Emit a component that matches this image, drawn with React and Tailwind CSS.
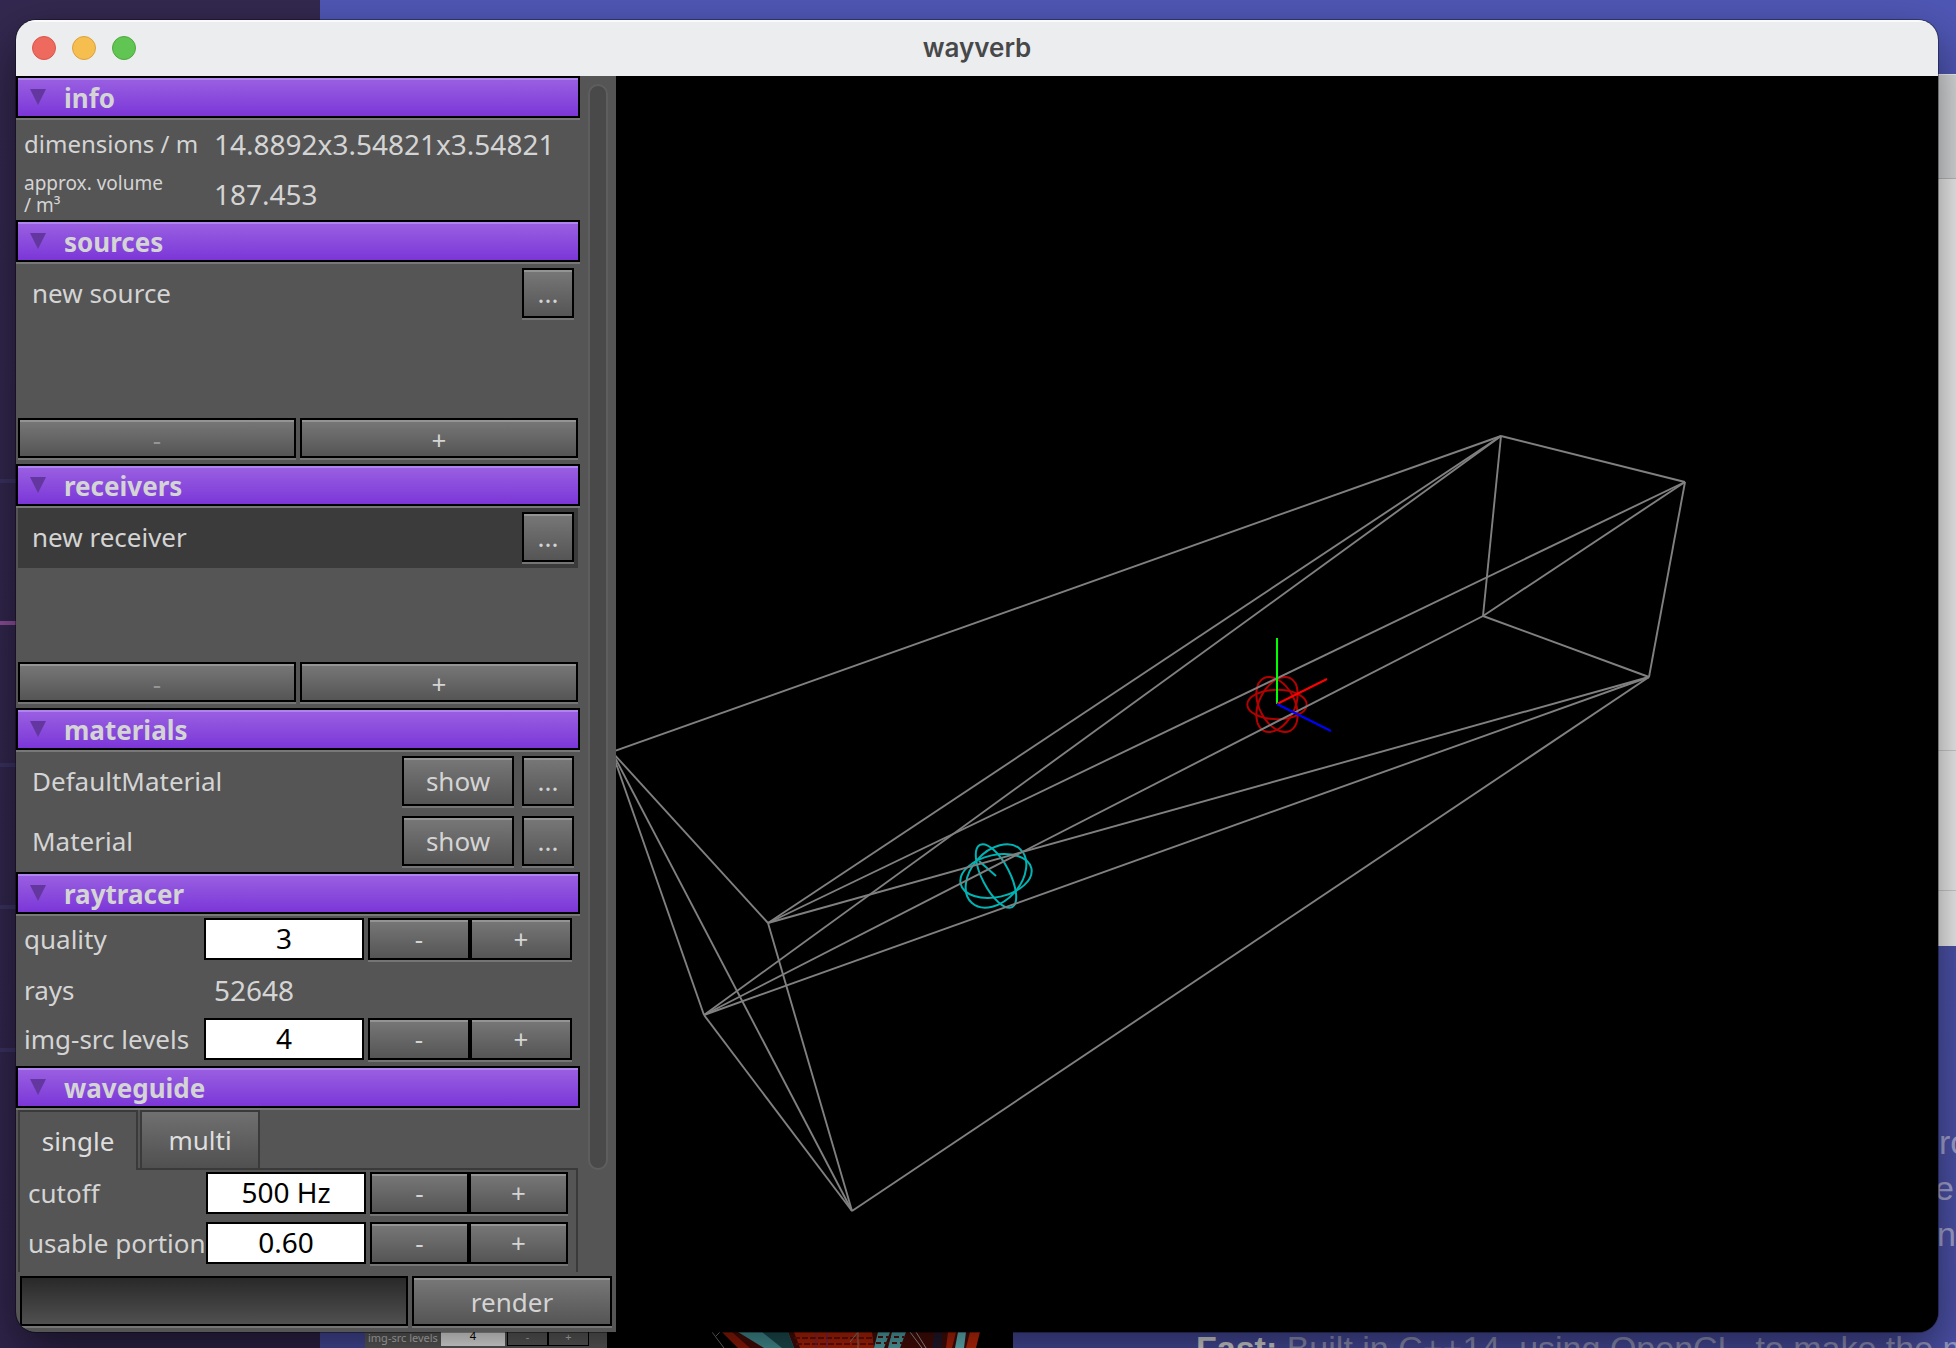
import { useState } from "react";
import clsx from "clsx";

const bevel =
  "border-2 border-black bg-linear-to-b from-[#787878] to-[#555555] shadow-[inset_0_2px_#949494,0_2px_#757575]";

// room corners, in viewport units
const corners = {
  a: [885, 360],
  b: [1069, 406],
  c: [1033, 601],
  d: [867, 540],
  e: [-4, 676],
  f: [152, 847],
  g: [88, 939],
  h: [236, 1135],
};

const edges = [
  "ab", "bc", "cd", "da", "bd", "ea", "fa", "fb", "fc",
  "ga", "gd", "gc", "hc", "ef", "fh", "hg", "ge", "eh",
];

function BevelButton({ className, children, ...props }) {
  return (
    <button
      type="button"
      className={clsx(
        "flex items-center justify-center text-[#d4d4d4] disabled:text-[#959595]",
        bevel,
        className,
      )}
      {...props}
    >
      {children}
    </button>
  );
}

function Section({ title, children }) {
  return (
    <section>
      <h2 className="mb-[2px] h-[42px] border-2 border-black bg-linear-to-b from-[#9a60e1] to-[#7c35d8] shadow-[inset_0_2px_#b084ef,0_2px_#787878]">
        <button
          type="button"
          className="flex h-full w-full items-center gap-[18px] pl-3 text-left text-[26px] leading-none font-bold text-[#d4d4d4]"
        >
          <svg width="16" height="16" viewBox="0 0 16 16" aria-hidden="true">
            <path d="M0 0H16L8 16Z" fill="#63379f" />
          </svg>
          <span className="pt-[2px]">{title}</span>
        </button>
      </h2>
      {children}
    </section>
  );
}

function ItemRow({ name, selected, showable }) {
  return (
    <li
      className={clsx(
        "mx-[2px] flex h-[60px] items-center gap-2 pr-1 pb-[2px] pl-[14px]",
        selected && "bg-[#3b3b3b]",
      )}
    >
      <span className="flex-1">{name}</span>
      {showable && (
        <BevelButton className="h-[50px] w-[112px]">show</BevelButton>
      )}
      <BevelButton className="h-[50px] w-[52px]" aria-label={`edit ${name}`}>
        ...
      </BevelButton>
    </li>
  );
}

function ItemList({ name, selected }) {
  return (
    <div className="flex h-[200px] flex-col pb-[6px]">
      <ul className="flex-1">
        <ItemRow name={name} selected={selected} />
      </ul>
      <div className="mx-[2px] flex gap-1">
        <BevelButton className="h-10 flex-1 pt-1" disabled>
          -
        </BevelButton>
        <BevelButton className="h-10 flex-1 pt-1">+</BevelButton>
      </div>
    </div>
  );
}

function Stepper({ id, label, initial, className, labelWidth = "w-[180px]" }) {
  const [value, setValue] = useState(initial);
  return (
    <div className={clsx("flex h-[50px] items-center pb-1", className)}>
      <label
        htmlFor={id}
        className={clsx("shrink-0 whitespace-nowrap", labelWidth)}
      >
        {label}
      </label>
      <input
        id={id}
        value={value}
        onChange={(e) => setValue(e.target.value)}
        className="mr-1 h-[42px] w-[160px] border-2 border-black bg-white pb-[2px] text-center text-[28px] text-black"
      />
      <BevelButton className="h-[42px] flex-1" aria-label={`decrease ${label}`}>
        -
      </BevelButton>
      <BevelButton className="h-[42px] flex-1" aria-label={`increase ${label}`}>
        +
      </BevelButton>
    </div>
  );
}

function Sidebar() {
  return (
    <aside className="flex w-[600px] shrink-0 flex-col bg-[#555555] font-['Noto_Sans','Open_Sans',sans-serif] text-[26px] leading-none text-[#d4d4d4]">
      <div className="flex min-h-0 flex-1 overflow-hidden">
        <div className="w-[564px]">
          <Section title="info">
            <dl>
              <div className="flex h-[50px] items-center pb-[2px] pl-2">
                <dt className="w-[190px] text-2xl">dimensions / m</dt>
                <dd className="text-[28px]">14.8892x3.54821x3.54821</dd>
              </div>
              <div className="flex h-[50px] items-center pb-[2px] pl-2">
                <dt className="w-[190px] text-[19px] leading-[22px]">
                  approx. volume
                  <br />/ m³
                </dt>
                <dd className="text-[28px]">187.453</dd>
              </div>
            </dl>
          </Section>

          <Section title="sources">
            <ItemList name="new source" />
          </Section>

          <Section title="receivers">
            <ItemList name="new receiver" selected />
          </Section>

          <Section title="materials">
            <ul>
              <ItemRow name="DefaultMaterial" showable />
              <ItemRow name="Material" showable />
            </ul>
          </Section>

          <Section title="raytracer">
            <Stepper id="quality" label="quality" initial="3" className="px-2" />
            <div className="flex h-[50px] items-center pb-[2px] pl-2">
              <span className="w-[190px]">rays</span>
              <span className="text-[28px]">52648</span>
            </div>
            <Stepper
              id="levels"
              label="img-src levels"
              initial="4"
              className="px-2"
            />
          </Section>

          <Section title="waveguide">
            <div className="mx-[2px]">
              <div role="tablist" className="flex h-[60px] text-[#dedede]">
                <button
                  type="button"
                  role="tab"
                  aria-selected="true"
                  className="w-[120px] border-2 border-b-0 border-[#3a3a3a]"
                >
                  single
                </button>
                <div className="w-[2px] border-b-2 border-[#3a3a3a]" />
                <button
                  type="button"
                  role="tab"
                  aria-selected="false"
                  className="w-[120px] border-2 border-[#3a3a3a] bg-linear-to-b from-[#707070] to-[#505050]"
                >
                  multi
                </button>
                <div className="flex-1 border-b-2 border-[#3a3a3a]" />
              </div>
              <div className="h-[160px] border-x-2 border-[#3a3a3a] px-2">
                <Stepper
                  id="cutoff"
                  label="cutoff"
                  initial="500 Hz"
                  labelWidth="w-[178px]"
                />
                <Stepper
                  id="portion"
                  label="usable portion"
                  initial="0.60"
                  labelWidth="w-[178px]"
                />
              </div>
            </div>
          </Section>
        </div>

        <div className="flex-1 px-2 pt-2">
          <div className="h-[1086px] w-5 rounded-full border-2 border-[#5e5e5e] bg-[#494949]" />
        </div>
      </div>

      <div className="flex h-[60px] shrink-0 gap-1 px-1 pt-1">
        <div
          role="progressbar"
          aria-label="render progress"
          className="h-[50px] flex-1 border-2 border-black bg-linear-to-b from-[#292929] to-[#505050] shadow-[0_2px_#757575]"
        />
        <BevelButton className="h-[50px] w-[200px] pt-[2px]">render</BevelButton>
      </div>
    </aside>
  );
}

function Viewport() {
  return (
    <svg
      viewBox="0 0 1322 1256"
      preserveAspectRatio="xMinYMin slice"
      className="h-full w-full"
      fill="none"
      aria-label="room model"
    >
      {/* receiver */}
      <g stroke="#00b4b4" strokeWidth="2" transform="translate(380 800)">
        <ellipse rx="36.2" ry="21.1" transform="rotate(-12.3)" />
        <ellipse rx="24.8" ry="36.2" transform="rotate(41.5)" />
        <ellipse rx="13.8" ry="35" transform="rotate(-27.3)" />
        <path d="M0 0L-17 -15" />
      </g>

      {/* source */}
      <g stroke="#b40000" strokeWidth="2" transform="translate(661 628.5)">
        <ellipse rx="29.7" ry="14.7" />
        <ellipse rx="17.8" ry="29.4" transform="rotate(-26.6)" />
        <ellipse rx="17.8" ry="29.4" transform="rotate(26.6)" />
      </g>

      <g stroke="#808080" strokeWidth="1.9">
        {edges.map((edge) => {
          const [x1, y1] = corners[edge[0]];
          const [x2, y2] = corners[edge[1]];
          return <line key={edge} x1={x1} y1={y1} x2={x2} y2={y2} />;
        })}
      </g>

      {/* axes */}
      <g strokeWidth="2">
        <path d="M661 628V562" stroke="#00ff00" />
        <path d="M661 628L711 603" stroke="#ff0000" />
        <path d="M661 628L715 655" stroke="#0000ff" />
      </g>
    </svg>
  );
}

// Everything that peeks out from behind the main window
function Desktop() {
  return (
    <div
      aria-hidden="true"
      className="absolute inset-0 overflow-hidden bg-linear-to-b from-[#4f57b5] to-[#4b50a6] font-['Liberation_Sans',sans-serif] text-[34px] leading-[46px] text-[#a3a4d0]"
    >
      <div className="absolute inset-y-0 left-0 w-[320px] bg-linear-to-b from-[#33284f] to-[#30254c]">
        <div className="absolute top-[479px] h-1 w-full bg-[#3a3160]" />
        <div className="absolute top-[621px] h-1 w-full bg-[#8a4d98]" />
        <div className="absolute top-[763px] h-1 w-full bg-[#3a3160]" />
        <div className="absolute top-[905px] h-1 w-full bg-[#3a3160]" />
        <div className="absolute top-[1048px] h-1 w-full bg-[#3a3160]" />
      </div>

      <div className="absolute top-[74px] right-0 h-[872px] w-40 bg-[#f0f0f0]">
        <div className="h-[105px] border-t border-b border-t-[#f4f4f4] border-b-[#bcbcbc] bg-[#d8dadc]" />
        <div className="h-[572px] border-b border-[#cfcfcf]" />
        <div className="h-[140px] border-b border-[#cfcfcf]" />
      </div>

      <p className="absolute top-[1119px] left-[1939px]">ro</p>
      <p className="absolute top-[1165px] left-[1935px]">er</p>
      <p className="absolute top-[1211px] left-[1937px]">n</p>
      <p className="absolute top-[1325px] left-[1196px] whitespace-nowrap text-[#9a9bc4]">
        <strong className="text-[#e4e4e4]">Fast:</strong> Built in C++14, using
        OpenCL, to make the most
      </p>

      <div className="absolute bottom-0 left-[365px] flex h-10 w-[648px] items-end bg-black">
        <div className="flex h-10 w-[242px] items-end bg-[#626262] pl-[3px] font-['Noto_Sans',sans-serif] text-[11px] leading-5 text-[#d0d0d0]">
          <span className="w-[73px] whitespace-nowrap">img-src levels</span>
          <span className="mb-[2px] h-10 w-16 bg-white pt-5 text-center text-black">
            4
          </span>
          <span className="mb-[2px] ml-[2px] h-10 w-[41px] border border-black pt-5 text-center">
            -
          </span>
          <span className="mb-[2px] h-10 w-[41px] border border-black pt-5 text-center">
            +
          </span>
        </div>
        <svg
          width="268"
          height="16"
          viewBox="0 0 268 16"
          className="ml-[105px]"
        >
          <path d="M10 0H268L258 16H26Z" fill="#4a0d08" />
          <path d="M10 0H20L38 16H26Z" fill="#9c1c08" />
          <path d="M0 0L12 16M4 4L8 0" stroke="#777" fill="none" />
          <path d="M26 0H76L82 16H52Z" fill="#4a9ea2" />
          <path d="M50 0H76L82 16H70Z" fill="#1e5357" />
          <path d="M82 0H160L162 16H88Z" fill="#c02408" />
          <path
            d="M82 6H160M84 12H162"
            stroke="#6e1206"
            strokeWidth="2"
            strokeDasharray="6 2"
          />
          <path d="M104 0V16M115 0V16" stroke="#7a2a6a" />
          <path d="M138 10L146 0M146 16V0" stroke="#9a8a80" />
          <path d="M166 0H178L172 16H162Z" fill="#57b5bb" />
          <path d="M180 0H194L188 16H176Z" fill="#57b5bb" />
          <path
            d="M166 5H192M164 11H190"
            stroke="#5a1410"
            strokeWidth="2"
            strokeDasharray="5 3"
          />
          <path d="M198 0L210 16M204 0L214 16" stroke="#aaa" />
          <path d="M222 0H230V16H220Z" fill="#27192e" />
          <path d="M236 0H244L240 16H234Z" fill="#c02408" />
          <path d="M246 0H254L252 16H243Z" fill="#6ccbd0" />
          <path d="M258 0H268L264 16H254Z" fill="#d02c0a" />
        </svg>
      </div>
    </div>
  );
}

export default function App() {
  return (
    <div className="relative h-screen overflow-hidden">
      <Desktop />
      <div className="relative flex h-full pt-5 pr-[18px] pb-4 pl-4">
        <main className="flex flex-1 flex-col overflow-hidden rounded-[20px] bg-black shadow-[0_0_0_1px_rgba(0,0,0,0.35),0_20px_48px_rgba(0,0,0,0.5)]">
          <header className="grid h-14 shrink-0 grid-cols-3 items-center bg-[#ebedef] px-4 shadow-[inset_0_2px_#fafafa]">
            <div className="flex gap-4">
              <button
                type="button"
                aria-label="Close"
                className="size-6 rounded-full border border-[#d9544c] bg-[#ee6a5f]"
              />
              <button
                type="button"
                aria-label="Minimize"
                className="size-6 rounded-full border border-[#dba13f] bg-[#f5be4f]"
              />
              <button
                type="button"
                aria-label="Zoom"
                className="size-6 rounded-full border border-[#4fa73f] bg-[#61c554]"
              />
            </div>
            <h1 className="text-center font-['Inter',sans-serif] text-[26px] leading-none font-semibold text-[#474849]">
              wayverb
            </h1>
          </header>
          <div className="flex min-h-0 flex-1">
            <Sidebar />
            <div className="min-w-0 flex-1 bg-black">
              <Viewport />
            </div>
          </div>
        </main>
      </div>
    </div>
  );
}
